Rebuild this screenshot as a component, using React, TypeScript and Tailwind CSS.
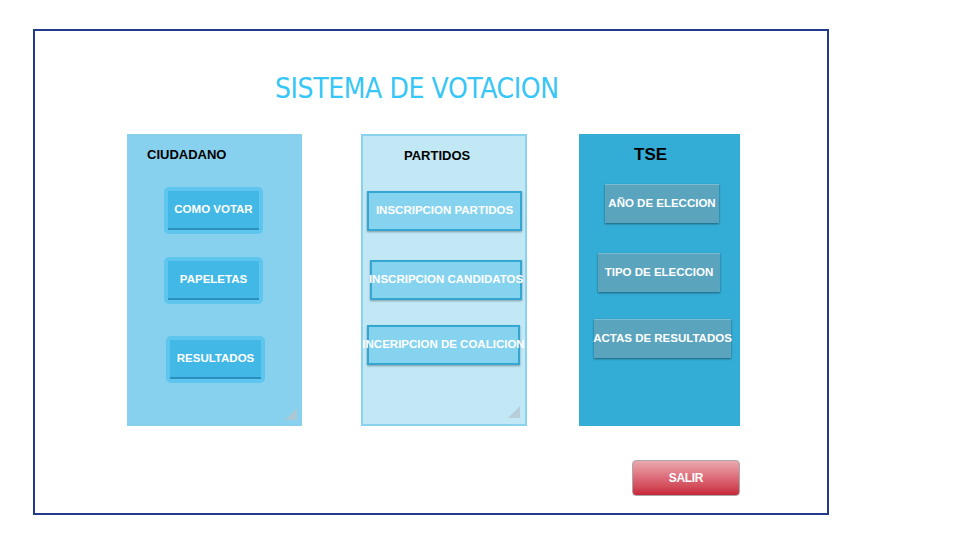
import React from "react";

const sans = { fontFamily: '"Liberation Sans", Arial, sans-serif' };

const Grip = () => (
  <svg width="12" height="12" viewBox="0 0 12 12" className="absolute right-[5px] bottom-[6px]">
    <polygon points="12,0 12,12 0,12" fill="#b4c6cf" opacity="0.8" />
  </svg>
);

const CiudadanoBtn = ({ label, ml, mt }: { label: string; ml: string; mt: string }) => (
  <div className={`${ml} ${mt} w-[99px] h-[47px] rounded-[5px] bg-[#5ec6ee] p-[4px]`}>
    <div className="h-full w-full bg-[#42b8e6] border-b-2 border-[#2b8fbe] flex items-center justify-center text-white font-bold text-[11.5px]">
      {label}
    </div>
  </div>
);

const PartidoBtn = ({ label, cls }: { label: string; cls: string }) => (
  <div
    className={`${cls} h-[40px] bg-[#86d3ef] border-2 border-[#33a6d1] shadow-[0_1px_2px_rgba(0,0,0,0.35)] flex items-center justify-center whitespace-nowrap text-white font-bold text-[11.5px] overflow-visible`}
  >
    {label}
  </div>
);

const TseBtn = ({ label, cls }: { label: string; cls: string }) => (
  <div
    className={`${cls} h-[39px] bg-[#5ba4be] border-t border-[#7dbbd0] shadow-[0_1px_2px_rgba(0,0,0,0.45)] flex items-center justify-center whitespace-nowrap text-white font-bold text-[11.5px]`}
  >
    {label}
  </div>
);

export default function App() {
  return (
    <div className="w-[977px] h-[536px] bg-white pt-[29px] pl-[33px]" style={sans}>
      <div className="w-[796px] h-[486px] border-2 border-[#233a8b] flex flex-col">
        <div
          className="pl-[240px] mt-[42px] h-[32px] leading-[32px] text-[28px] tracking-[-0.4px] text-[#36c6f7] whitespace-nowrap"
          style={{ fontFamily: '"DejaVu Sans Condensed", "Liberation Sans", sans-serif' }}
        >
          SISTEMA DE VOTACION
        </div>

        <div className="flex mt-[29px] pl-[92px]">
          {/* Ciudadano */}
          <div className="relative w-[175px] h-[292px] bg-[#87d1ef] flex flex-col">
            <div className="pl-[20px] mt-[13px] h-[16px] leading-[16px] text-[13px] font-bold text-black">CIUDADANO</div>
            <CiudadanoBtn label="COMO VOTAR" ml="ml-[37px]" mt="mt-[24px]" />
            <CiudadanoBtn label="PAPELETAS" ml="ml-[37px]" mt="mt-[23px]" />
            <CiudadanoBtn label="RESULTADOS" ml="ml-[39px]" mt="mt-[32px]" />
            <Grip />
          </div>

          {/* Partidos */}
          <div className="relative ml-[59px] w-[166px] h-[292px] bg-[#c2e8f6] border-2 border-[#8ad3f0] flex flex-col">
            <div className="pl-[41px] mt-[12px] h-[16px] leading-[16px] text-[13px] font-bold text-black">PARTIDOS</div>
            <PartidoBtn label="INSCRIPCION PARTIDOS" cls="ml-[4px] w-[155px] mt-[27px]" />
            <PartidoBtn label="INSCRIPCION CANDIDATOS" cls="ml-[7px] w-[152px] mt-[29px]" />
            <PartidoBtn label="INCERIPCION DE COALICION" cls="ml-[4px] w-[153px] mt-[25px]" />
            <Grip />
          </div>

          {/* TSE */}
          <div className="ml-[52px] w-[161px] h-[292px] bg-[#33acd6] flex flex-col">
            <div className="pl-[55px] mt-[11px] h-[20px] leading-[20px] text-[17px] font-bold text-black">TSE</div>
            <TseBtn label="AÑO DE ELECCION" cls="ml-[26px] w-[114px] mt-[19px]" />
            <TseBtn label="TIPO DE ELECCION" cls="ml-[19px] w-[122px] mt-[30px]" />
            <TseBtn label="ACTAS DE RESULTADOS" cls="ml-[15px] w-[137px] mt-[27px]" />
          </div>
        </div>

        <div className="flex mt-[34px] pl-[597px]">
          <button className="w-[108px] h-[36px] rounded-[4px] border border-[#a9a9a9] bg-gradient-to-b from-[#e9a9b0] via-[#dc6a78] to-[#c7253a] text-white font-bold text-[12px] tracking-tight">
            SALIR
          </button>
        </div>
      </div>
    </div>
  );
}
